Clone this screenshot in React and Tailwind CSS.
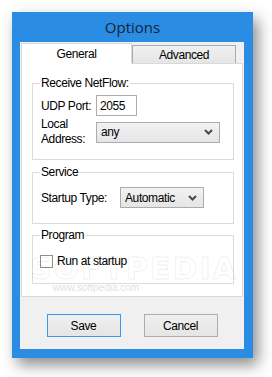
import React from "react";

function Chevron() {
  return (
    <svg width="9" height="6" viewBox="0 0 9 6" className="shrink-0">
      <path d="M1 1 L4.5 4.5 L8 1" fill="none" stroke="#4a4a4a" strokeWidth="2" />
    </svg>
  );
}

function Combo({ value, w }) {
  return (
    <div
      className={`${w} h-[21px] flex items-center justify-between pl-[4px] pr-[6px] border border-[#acacac] bg-gradient-to-b from-[#f2f2f2] to-[#e5e5e5]`}
    >
      <span>{value}</span>
      <Chevron />
    </div>
  );
}

function Group({ label, h, className = "", children }) {
  return (
    <div className={`relative w-[202px] ${h} border border-[#dcdcdc] ${className}`}>
      <span className="absolute left-[7px] top-[-8px] bg-white px-[1px] leading-[14px]">
        {label}
      </span>
      {children}
    </div>
  );
}

export default function App() {
  return (
    <div
      className="w-[272px] h-[377px] bg-white pt-[12px] pl-[12px] text-black text-[12px] tracking-[-0.4px]"
      style={{ fontFamily: '"Liberation Sans", Arial, sans-serif' }}
    >
      <div className="w-[241px] h-[346px] bg-[#2a8ce3] flex flex-col shadow-[5px_7px_14px_rgba(0,0,0,0.45)]">
        <div className="h-[30px] flex items-center justify-center">
          <span
            className="text-[15px] tracking-normal text-gray-900 opacity-90"
            style={{ fontFamily: '"Open Sans", "Noto Sans", sans-serif' }}
          >
            Options
          </span>
        </div>
        <div className="ml-[8px] w-[224px] h-[307px] bg-[#f0f0f0] pt-[1px] px-[1px] flex flex-col">
          {/* tab headers */}
          <div className="h-[20px] flex items-end">
            <div className="relative z-10 -mb-[1px] w-[111px] h-[21px] bg-white border border-b-0 border-[#d9d9d9] flex items-center justify-center pb-[1px]">
              General
            </div>
            <div className="w-[104px] h-[18px] border border-b-0 border-[#acacac] bg-gradient-to-b from-[#f0f0f0] to-[#e5e5e5] flex items-center justify-center">
              Advanced
            </div>
          </div>
          {/* panel */}
          <div className="relative w-[222px] h-[234px] bg-white border border-[#d9d9d9] pl-[10px] flex flex-col">
            <Group label="Receive NetFlow:" h="h-[77px]" className="mt-[19px]">
              <div className="pt-[11px] pl-[8px] flex flex-col">
                <div className="flex items-center h-[21px]">
                  <span className="w-[55px]">UDP Port:</span>
                  <div className="w-[41px] h-[21px] border border-[#acacac] bg-white flex items-center pl-[3px]">
                    2055
                  </div>
                </div>
                <div className="flex items-center mt-[1px]">
                  <span className="w-[55px] leading-[15px]">
                    Local
                    <br />
                    Address:
                  </span>
                  <Combo value="any" w="w-[124px]" />
                </div>
              </div>
            </Group>
            <Group label="Service" h="h-[52px]" className="mt-[12px]">
              <div className="pt-[14px] pl-[8px] flex items-center">
                <span className="w-[79px]">Startup Type:</span>
                <Combo value="Automatic" w="w-[84px]" />
              </div>
            </Group>
            <Group label="Program" h="h-[49px]" className="mt-[11px]">
              <div className="pt-[19px] pl-[7px] flex items-center gap-[4px]">
                <div className="w-[13px] h-[13px] border border-[#8f8f8f] bg-white" />
                <span className="leading-[13px]">Run at startup</span>
              </div>
            </Group>
            <div
              className="pointer-events-none absolute left-[8px] top-[182px] text-[30px] font-bold tracking-[2px] text-transparent [-webkit-text-stroke:1px_rgba(0,0,0,0.08)]"
              style={{ fontFamily: '"DejaVu Sans", sans-serif' }}
            >
              SOFTPEDIA
            </div>
            <div className="pointer-events-none absolute left-[31px] top-[216px] text-[10px] tracking-normal text-[#e2e2e2]">
              www.softpedia.com
            </div>
          </div>
          {/* buttons */}
          <div className="mt-[17px] flex justify-center gap-[23px]">
            <button className="w-[74px] h-[23px] border border-[#3d95ec] bg-gradient-to-b from-[#f0f0f0] to-[#e5e5e5] text-[12px]">
              Save
            </button>
            <button className="w-[74px] h-[23px] border border-[#acacac] bg-gradient-to-b from-[#f0f0f0] to-[#e5e5e5] text-[12px]">
              Cancel
            </button>
          </div>
        </div>
      </div>
    </div>
  );
}
